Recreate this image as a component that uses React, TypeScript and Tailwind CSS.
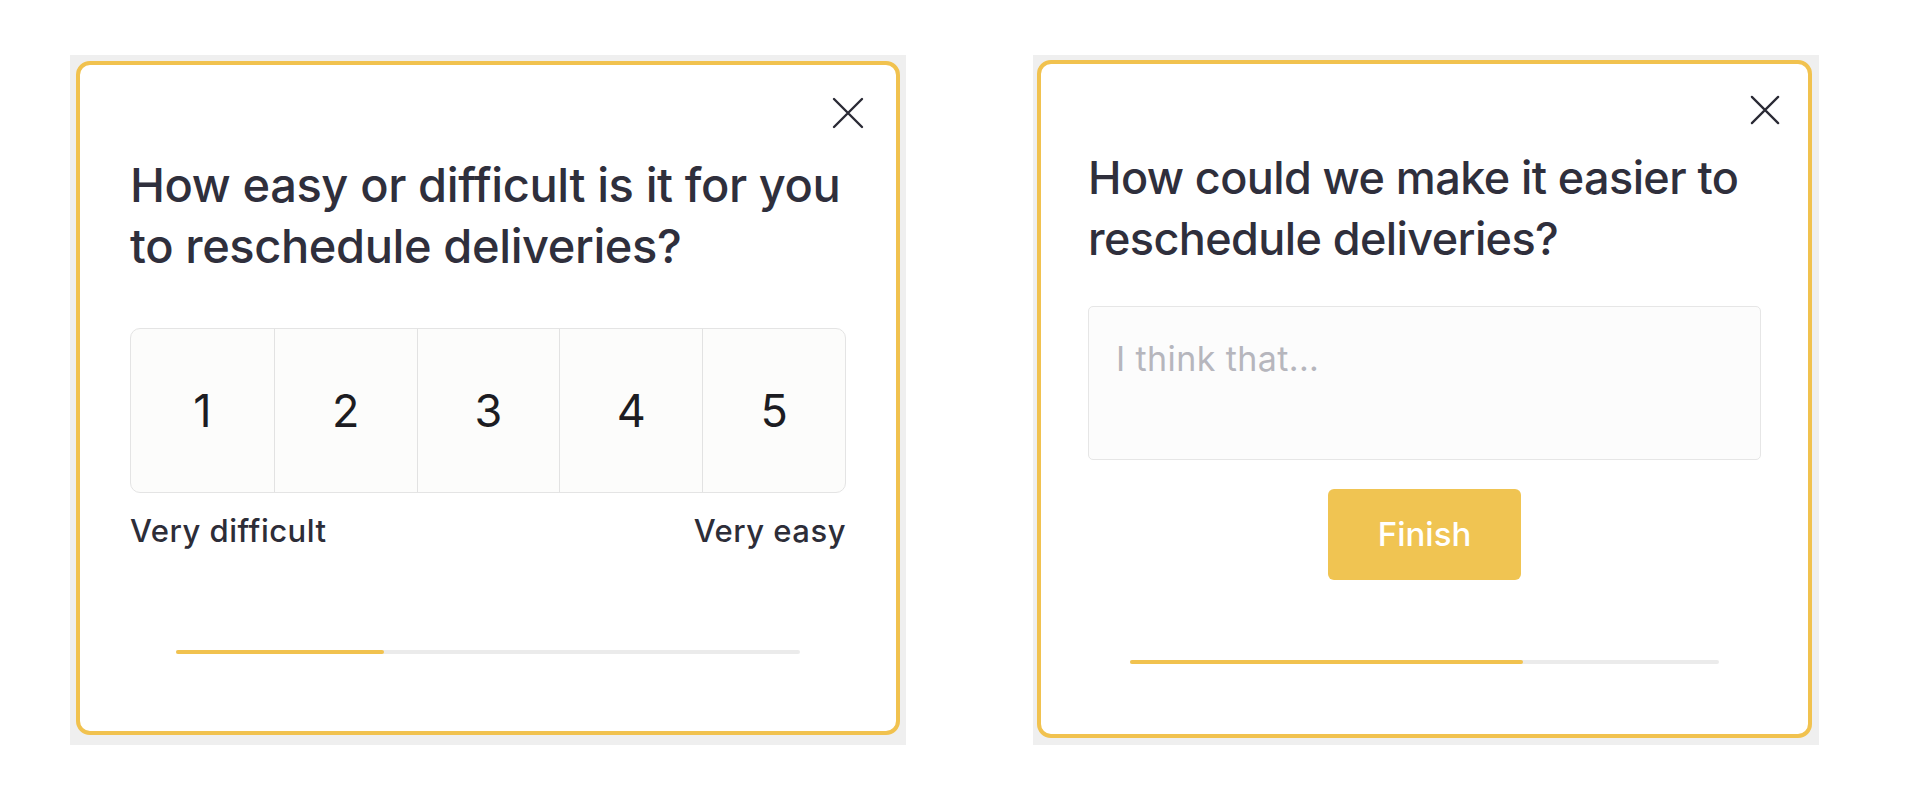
import React from "react";

const CloseIcon = ({ size }: { size: number }) => (
  <svg
    width={size}
    height={size}
    viewBox="0 0 32 32"
    fill="none"
    stroke="#2a2a35"
    strokeWidth={2.4}
    strokeLinecap="round"
  >
    <path d="M2 2L30 30M30 2L2 30" />
  </svg>
);

const Progress = ({ width, fill }: { width: string; fill: string }) => (
  <div className={`mx-auto h-1 rounded-full bg-[#ebebeb] ${width}`}>
    <div className={`h-full rounded-full bg-[#f1c24f] ${fill}`} />
  </div>
);

const RatingCard = () => {
  const values = [1, 2, 3, 4, 5];

  return (
    <div className="bg-[#efefef] px-[6px] pt-[6px] pb-[10px]">
      <div className="flex h-[674px] w-[824px] flex-col rounded-[14px] border-4 border-[#f1c24f] bg-white">
        <div className="flex justify-end pt-8 pr-8">
          <button type="button" aria-label="Close">
            <CloseIcon size={32} />
          </button>
        </div>

        <div className="flex flex-col px-[50px]">
          <h2 className="mt-[25px] text-[47px] leading-[61px] font-medium tracking-[-0.4px] text-[#2f2f3c]">
            How easy or difficult is it for you to reschedule deliveries?
          </h2>

          {/* Scale */}
          <div className="mt-[52px] grid h-[165px] grid-cols-5 overflow-hidden rounded-[10px] border border-[#e4e4e4] bg-[#fcfcfb]">
            {values.map((v) => (
              <button
                key={v}
                type="button"
                className="flex items-center justify-center border-l border-[#e2e2e2] text-[45px] text-[#1c1c22] first:border-l-0"
              >
                {v}
              </button>
            ))}
          </div>

          <div className="mt-[20px] flex justify-between text-[31px] leading-[36px] font-medium tracking-[0.5px] text-[#2d2d38]">
            <span>Very difficult</span>
            <span>Very easy</span>
          </div>

          <div className="mt-[101px]">
            <Progress width="w-[624px]" fill="w-1/3" />
          </div>
        </div>
      </div>
    </div>
  );
};

const FeedbackCard = () => {
  return (
    <div className="bg-[#efefef] pt-[5px] pr-[7px] pb-[7px] pl-[4px]">
      <div className="flex h-[678px] w-[775px] flex-col rounded-[14px] border-4 border-[#f1c24f] bg-white">
        <div className="flex justify-end pt-[31px] pr-7">
          <button type="button" aria-label="Close">
            <CloseIcon size={30} />
          </button>
        </div>

        <div className="flex flex-col px-[47px]">
          <h2 className="mt-[22px] text-[45px] leading-[61px] font-medium tracking-[-0.6px] text-[#2f2f3c]">
            How could we make it easier to reschedule deliveries?
          </h2>

          <textarea
            placeholder="I think that..."
            className="mt-[37px] h-[154px] w-full resize-none rounded-[5px] border border-[#e6e6e6] bg-[#fcfcfc] pt-8 pl-[27px] text-[34px] leading-[40px] tracking-[0.4px] text-[#2f2f3c] outline-none placeholder:text-[#b6b6bd]"
          />

          <div className="mt-[29px] flex justify-center">
            <button
              type="button"
              className="h-[91px] w-[193px] rounded-[6px] bg-[#f0c452] text-[33px] font-medium text-white"
            >
              Finish
            </button>
          </div>

          <div className="mt-[80px]">
            <Progress width="w-[589px]" fill="w-2/3" />
          </div>
        </div>
      </div>
    </div>
  );
};

export default function App() {
  return (
    <div className="flex min-h-[795px] items-start gap-[127px] bg-white pt-[55px] pl-[70px] font-[Inter,sans-serif]">
      <RatingCard />
      <FeedbackCard />
    </div>
  );
}
